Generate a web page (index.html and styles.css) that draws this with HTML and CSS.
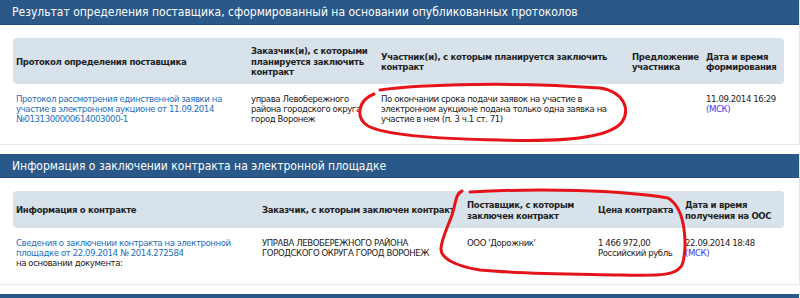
FILE: index.html
```html
<!DOCTYPE html>
<html lang="ru">
<head>
<meta charset="utf-8">
<title>Результат определения поставщика</title>
<link rel="stylesheet" href="styles.css">
</head>
<body>
<div class="page">
  <section class="panel panel-first">
    <div class="panel-head">Результат определения поставщика, сформированный на основании опубликованных протоколов</div>
    <div class="panel-body">
      <table class="grid grid-one">
        <colgroup>
          <col class="c1a"><col class="c2a"><col class="c3a"><col class="c4a"><col class="c5a">
        </colgroup>
        <thead>
          <tr>
            <th>Протокол определения поставщика</th>
            <th>Заказчик(и), с которыми планируется заключить контракт</th>
            <th>Участник(и), с которым планируется заключить контракт</th>
            <th>Предложение участника</th>
            <th>Дата и время формирования</th>
          </tr>
        </thead>
        <tbody>
          <tr>
            <td><a class="link" href="#">Протокол рассмотрения единственной заявки на участие в электронном аукционе от 11.09.2014 №0131300000614003000-1</a></td>
            <td>управа Левобережного района городского округа город Воронеж</td>
            <td>По окончании срока подачи заявок на участие в электронном аукционе подана только одна заявка на участие в нем (п. 3 ч.1 ст. 71)</td>
            <td></td>
            <td><span class="date">11.09.2014 16:29</span><br><span class="tz">(МСК)</span></td>
          </tr>
        </tbody>
      </table>
    </div>
  </section>

  <section class="panel panel-second">
    <div class="panel-head">Информация о заключении контракта на электронной площадке</div>
    <div class="panel-body">
      <table class="grid grid-two">
        <colgroup>
          <col class="c1b"><col class="c2b"><col class="c3b"><col class="c4b"><col class="c5b">
        </colgroup>
        <thead>
          <tr>
            <th>Информация о контракте</th>
            <th class="nowrap">Заказчик, с которым заключен контракт</th>
            <th>Поставщик, с которым заключен контракт</th>
            <th>Цена контракта</th>
            <th>Дата и время получения на ООС</th>
          </tr>
        </thead>
        <tbody>
          <tr>
            <td><a class="link" href="#">Сведения о заключении контракта на электронной площадке от 22.09.2014 № 2014.272584</a><br>на основании документа:</td>
            <td>УПРАВА ЛЕВОБЕРЕЖНОГО РАЙОНА ГОРОДСКОГО ОКРУГА ГОРОД ВОРОНЕЖ</td>
            <td>ООО 'Дорожник'</td>
            <td>1 466 972,00<br>Российский рубль</td>
            <td><span class="date">22.09.2014 18:48</span><br><span class="tz">(МСК)</span></td>
          </tr>
        </tbody>
      </table>
    </div>
  </section>

  <section class="panel panel-third">
    <div class="panel-head"></div>
  </section>

  <svg class="marks" width="800" height="298" viewBox="0 0 800 298" aria-hidden="true">
    <path d="M380 90 C 420 84, 520 82, 600 88 C 625 92, 630 110, 622 122 C 610 138, 560 142, 500 140 C 440 139, 385 135, 368 126 C 355 118, 358 100, 374 94" />
    <path d="M470 192 C 540 188, 620 190, 668 198 C 688 210, 686 250, 683 262 C 680 276, 660 276, 620 275 C 570 274, 520 274, 480 270 C 455 266, 440 258, 441 248 C 442 238, 448 226, 452 215 C 456 204, 455 194, 462 191" />
  </svg>
</div>
</body>
</html>
```
FILE: styles.css
```css
html, body {
  margin: 0;
  padding: 0;
  background: #ffffff;
}

.page {
  position: relative;
  width: 800px;
  height: 298px;
  overflow: hidden;
  font-family: "DejaVu Sans Condensed", "DejaVu Sans", sans-serif;
  font-stretch: condensed;
  color: #222222;
}

.panel {
  width: 799px;
  border-right: 1px solid #e3e7eb;
  border-bottom: 1px solid #e6e9ec;
}

.panel-second {
  margin-top: 9px;
}

.panel-third {
  margin-top: 9px;
  border: none;
}

.panel-head {
  height: 24px;
  box-sizing: border-box;
  background: #2a5889;
  border-bottom: 1px solid #22497a;
  color: #ffffff;
  font-size: 12px;
  line-height: 24px;
  padding-left: 12px;
  white-space: nowrap;
}

.panel-first .panel-head {
  height: 25px;
}

.panel-body {
  padding: 13px 15px 10px 13px;
}

.grid {
  width: 771px;
  border-collapse: separate;
  border-spacing: 0;
  table-layout: fixed;
  font-size: 9.5px;
  line-height: 10.5px;
}

.grid th {
  background: #d8e2eb;
  text-align: left;
  vertical-align: middle;
  font-weight: bold;
  color: #1f1f1f;
  letter-spacing: -0.3px;
  padding: 4px 3px 2px 3px;
}

.grid-one th { height: 40px; }
.grid-two th { height: 31px; }

.grid th:first-child { border-radius: 4px 0 0 4px; }
.grid th:last-child { border-radius: 0 4px 4px 0; }

.grid td {
  vertical-align: top;
  padding: 10px 3px 0 3px;
  color: #222222;
  letter-spacing: -0.4px;
  line-height: 10px;
}

.grid-one td { height: 40px; }
.grid-two td { height: 36px; }

.nowrap,
.date {
  white-space: nowrap;
}

.link {
  color: #1c6fbf;
  text-decoration: none;
}

.tz {
  color: #3a3af0;
}

.c1a { width: 235px; }
.c2a { width: 130px; }
.c3a { width: 251px; }
.c4a { width: 74px; }
.c5a { width: 81px; }

.c1b { width: 246px; }
.c2b { width: 205px; }
.c3b { width: 131px; }
.c4b { width: 87px; }
.c5b { width: 102px; }

.marks {
  position: absolute;
  left: 0;
  top: 0;
  pointer-events: none;
}

.marks path {
  fill: none;
  stroke: #e5141b;
  stroke-width: 3;
  stroke-linecap: round;
}
```
